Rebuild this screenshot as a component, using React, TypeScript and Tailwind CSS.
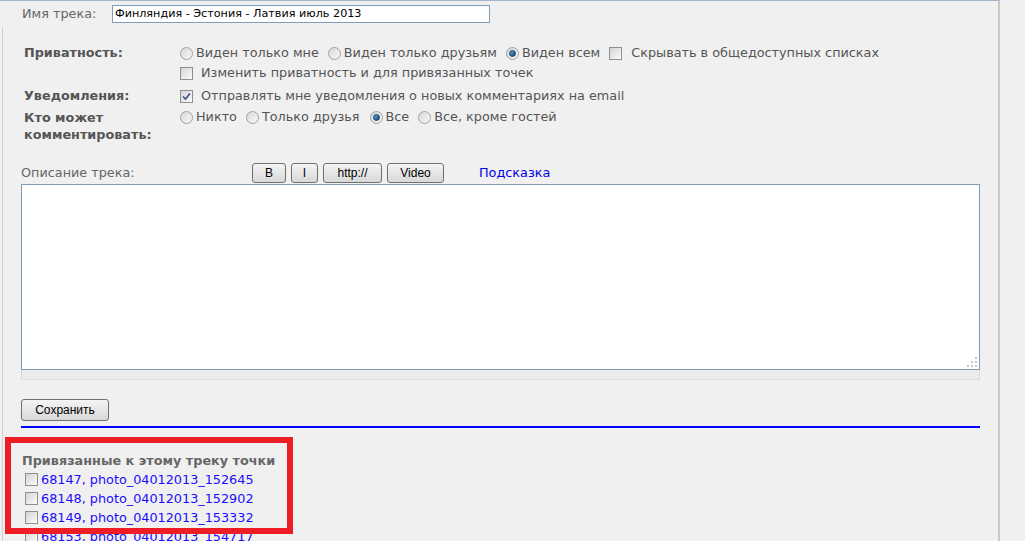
import React from 'react';

const font = { fontFamily: '"DejaVu Sans", Verdana, sans-serif' };

function Radio ({ checked = false }: { checked?: boolean }) {
  return (
    <span className="inline-flex items-center justify-center w-[13px] h-[13px] rounded-full border border-[#a0a0a0] bg-gradient-to-br from-[#d8d8d8] to-[#f8f8f8] shrink-0">
      {checked && (
        <span className="w-[7px] h-[7px] rounded-full bg-gradient-to-br from-[#6ab0e0] to-[#0b3f73] border border-[#103a60]" />
      )}
    </span>
  );
}

function Checkbox ({ checked = false }: { checked?: boolean }) {
  return (
    <span className="inline-flex items-center justify-center w-[13px] h-[13px] border border-[#8f8f8f] bg-gradient-to-br from-[#d4d4d4] to-[#fbfbfb] shrink-0">
      {checked && (
        <svg width="9" height="9" viewBox="0 0 9 9">
          <path d="M1 4.5 L3.5 7 L8 1.5" fill="none" stroke="#3a4f8a" strokeWidth="1.6" />
        </svg>
      )}
    </span>
  );
}

function ToolButton ({ children, w }: { children: React.ReactNode; w: string }) {
  return (
    <span
      className={`${w} h-[20px] inline-flex items-center justify-center rounded-[3px] border border-[#707070] bg-gradient-to-b from-[#f4f4f4] to-[#d8d8d8] text-[12px] text-black`}
      style={{ fontFamily: '"Liberation Sans", Arial, sans-serif' }}
    >
      {children}
    </span>
  );
}

const points = [
  '68147, photo_04012013_152645',
  '68148, photo_04012013_152902',
  '68149, photo_04012013_153332',
  '68153, photo_04012013_154717',
];

export default function App () {
  return (
    <div className="w-[1025px] h-[541px] bg-[#f0f0f0] overflow-hidden" style={font}>
      <div className="w-[1000px] h-[541px] border-t border-[#a4b4cc] border-r-2 border-r-[#c9c9c9] flex flex-col">
        {/* name */}
        <div className="h-[26px] shrink-0 flex items-start pt-[4px]">
          <span className="w-[112px] pl-[22px] text-[12.8px] leading-[18px] text-[#666]">Имя трека:</span>
          <div className="w-[378px] h-[18px] border border-[#7f9db9] bg-white flex items-center pl-[2px] text-[11.2px] text-black">
            Финляндия - Эстония - Латвия июль 2013
          </div>
        </div>

        <div className="flex-1 ml-[2px] border-l border-[#cfcfcf] flex flex-col">
          {/* privacy */}
          <div className="pt-[16px] text-[12.8px] text-[#555]">
            <div className="flex">
              <div className="w-[177px] pl-[21px] font-bold leading-[20px]">Приватность:</div>
              <div className="flex flex-col">
                <div className="h-[20px] flex items-center gap-[3px]">
                  <Radio /><span className="mr-[6px]">Виден только мне</span>
                  <Radio /><span className="mr-[6px]">Виден только друзьям</span>
                  <Radio checked /><span className="mr-[6px]">Виден всем</span>
                  <Checkbox />
                  <span className="ml-[6px]">Скрывать в общедоступных списках</span>
                </div>
                <div className="h-[20px] flex items-center">
                  <Checkbox /><span className="ml-[8px]">Изменить приватность и для привязанных точек</span>
                </div>
              </div>
            </div>

            <div className="flex mt-[3px]">
              <div className="w-[177px] pl-[21px] font-bold leading-[20px]">Уведомления:</div>
              <div className="h-[20px] flex items-center">
                <Checkbox checked /><span className="ml-[8px]">Отправлять мне уведомления о новых комментариях на email</span>
              </div>
            </div>

            <div className="flex mt-[1px]">
              <div className="w-[177px] pl-[21px] font-bold leading-[17px] pt-[2px]">Кто может<br />комментировать:</div>
              <div className="h-[20px] flex items-center gap-[3px]">
                <Radio /><span className="mr-[6px]">Никто</span>
                <Radio /><span className="mr-[7px]">Только друзья</span>
                <Radio checked /><span className="mr-[6px]">Все</span>
                <Radio /><span>Все, кроме гостей</span>
              </div>
            </div>
          </div>

          {/* description */}
          <div className="mt-[19px] pl-[18px] flex items-center h-[22px]">
            <span className="w-[231px] text-[12.8px] text-[#666]">Описание трека:</span>
            <div className="flex gap-[5px]">
              <ToolButton w="w-[34px]">B</ToolButton>
              <ToolButton w="w-[27px]">I</ToolButton>
              <ToolButton w="w-[59px]">http://</ToolButton>
              <ToolButton w="w-[57px]">Video</ToolButton>
            </div>
            <span className="ml-[35px] text-[12.8px] text-[#0000ee]">Подсказка</span>
          </div>

          <div className="ml-[18px] w-[959px]">
            <div className="relative h-[186px] bg-white border border-[#7f9db9]">
              <svg className="absolute right-[1px] bottom-[1px]" width="12" height="12" viewBox="0 0 12 12">
                <rect x="9" y="1" width="2" height="2" fill="#c8c8c8" />
                <rect x="5" y="5" width="2" height="2" fill="#c8c8c8" />
                <rect x="9" y="5" width="2" height="2" fill="#c8c8c8" />
                <rect x="1" y="9" width="2" height="2" fill="#c8c8c8" />
                <rect x="5" y="9" width="2" height="2" fill="#c8c8c8" />
                <rect x="9" y="9" width="2" height="2" fill="#c8c8c8" />
              </svg>
            </div>
            <div className="h-[10px] bg-[#ebebeb] border-x border-b border-[#dcdcdc]" />
          </div>

          {/* save */}
          <div className="ml-[18px] mt-[17px]">
            <span
              className="w-[88px] h-[22px] inline-flex items-center justify-center rounded-[3px] border border-[#707070] bg-gradient-to-b from-[#f4f4f4] to-[#d8d8d8] text-[12px] text-black"
              style={{ fontFamily: '"Liberation Sans", Arial, sans-serif' }}
            >
              Сохранить
            </span>
          </div>
          <div className="ml-[18px] w-[959px] mt-[5px] h-[2px] bg-[#0000ff]" />

          {/* points */}
          <div className="relative mt-[9px] pl-[19px] pt-[15px]">
            <div className="absolute left-[2px] top-0 w-[288px] h-[97px] border-[6px] border-[#ee1c24] pointer-events-none" />
            <div className="text-[12.8px] font-bold text-[#666] leading-[18px]">Привязанные к этому треку точки</div>
            <div className="flex flex-col">
              {points.map((p) => (
                <div key={p} className="h-[19px] shrink-0 flex items-center pl-[3px]">
                  <Checkbox />
                  <span className="ml-[3px] text-[12.8px] text-[#1a0dff]">{p}</span>
                </div>
              ))}
            </div>
          </div>
        </div>
      </div>
    </div>
  );
}
